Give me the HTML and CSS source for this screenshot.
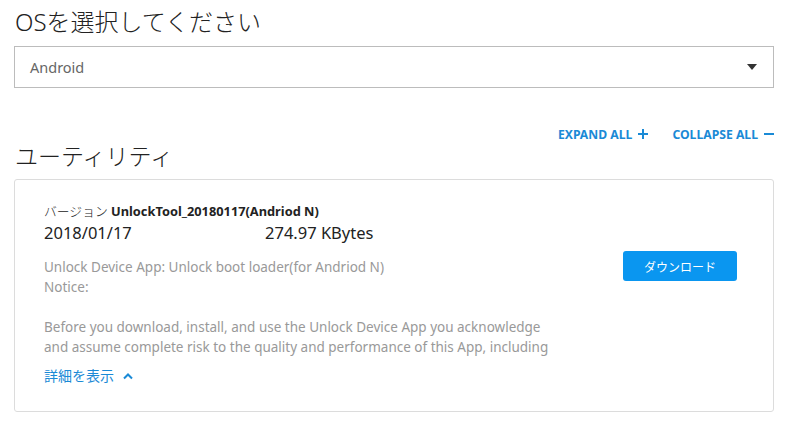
FILE: index.html
```html
<!DOCTYPE html>
<html lang="ja">
<head>
    <meta charset="UTF-8">
    <meta name="viewport" content="width=device-width, initial-scale=1.0">
    <title>Unlock Tool</title>
    <link rel="stylesheet" href="styles.css">
</head>
<body>
    <div class="container">
        <h1 class="page-title">OSを選択してください</h1>
        <div class="os-select">
            <span class="os-value">Android</span>
            <span class="os-arrow"></span>
        </div>

        <div class="toolbar">
            <a class="toggle-all">EXPAND ALL
                <svg width="10" height="10" viewBox="0 0 10 10"><path d="M0 5 H10 M5 0 V10" stroke="#1a8ad6" stroke-width="2"/></svg>
            </a>
            <a class="toggle-all">COLLAPSE ALL
                <svg width="10" height="10" viewBox="0 0 10 10"><path d="M0 5 H10" stroke="#1a8ad6" stroke-width="2"/></svg>
            </a>
        </div>

        <h2 class="section-title">ユーティリティ</h2>

        <section class="card">
            <div class="card-main">
                <div class="version"><span class="version-label">バージョン</span> <b>UnlockTool_20180117(Andriod N)</b></div>
                <div class="meta">
                    <span class="date">2018/01/17</span>
                    <span class="size">274.97 KBytes</span>
                </div>
                <div class="desc">
                    Unlock Device App: Unlock boot loader(for Andriod N)<br>
                    Notice:<br>
                    <br>
                    Before you download, install, and use the Unlock Device App you acknowledge<br>
                    and assume complete risk to the quality and performance of this App, including
                </div>
                <a class="more">詳細を表示
                    <svg width="10" height="8" viewBox="0 0 10 8"><path d="M1 6.5 L5 2.5 L9 6.5" fill="none" stroke="#1a8ad6" stroke-width="2"/></svg>
                </a>
            </div>
            <div class="card-side">
                <button class="download">ダウンロード</button>
            </div>
        </section>
    </div>
</body>
</html>
```

FILE: styles.css
```css
body {
    font-family: "Noto Sans", "Noto Sans CJK JP", sans-serif;
    background-color: #fff;
    color: #222;
    margin: 0;
    padding: 0;
}

.container {
    width: 760px;
    padding: 0 14px;
}

.page-title {
    font-size: 24px;
    font-weight: 300;
    margin: 0;
    padding: 4px 0 0 1px;
    height: 42px;
    line-height: 36px;
}

.os-select {
    height: 40px;
    border: 1px solid #bcbcbc;
    display: flex;
    align-items: center;
    justify-content: space-between;
    padding: 0 16px 0 15px;
}

.os-value {
    font-size: 14.5px;
    color: #666;
}

.os-arrow {
    width: 0;
    height: 0;
    border-left: 5px solid transparent;
    border-right: 5px solid transparent;
    border-top: 6px solid #333;
}

.toolbar {
    display: flex;
    justify-content: flex-end;
    gap: 24px;
    margin-top: 36px;
    height: 20px;
    align-items: center;
}

.toggle-all {
    display: flex;
    align-items: center;
    gap: 6px;
    color: #1a8ad6;
    font-size: 12.2px;
    font-weight: bold;
    cursor: pointer;
}

.section-title {
    font-size: 23px;
    font-weight: 300;
    margin: 0;
    padding-left: 1px;
    height: 35px;
    line-height: 24px;
}

.card {
    border: 1px solid #dcdcdc;
    border-radius: 3px;
    display: flex;
    padding: 21px 36px 20px 29px;
    height: 190px;
}

.card-main {
    flex: 1;
}

.version {
    font-size: 12.8px;
    line-height: 20px;
}

.version-label {
    font-weight: 300;
}

.meta {
    display: flex;
    font-size: 16.5px;
    line-height: 24px;
}

.date {
    width: 221px;
}

.desc {
    margin-top: 12px;
    font-size: 13.5px;
    line-height: 20px;
    color: #999;
    white-space: nowrap;
    height: 100px;
}

.more {
    display: inline-flex;
    align-items: center;
    gap: 9px;
    margin-top: 9px;
    color: #1a8ad6;
    font-size: 14px;
    line-height: 20px;
    cursor: pointer;
}

.card-side {
    padding-top: 50px;
}

.download {
    width: 114px;
    height: 30px;
    background-color: #0a96f0;
    color: #fff;
    border: none;
    border-radius: 3px;
    font-family: "Noto Sans CJK JP", sans-serif;
    font-size: 12px;
    cursor: pointer;
}
```
